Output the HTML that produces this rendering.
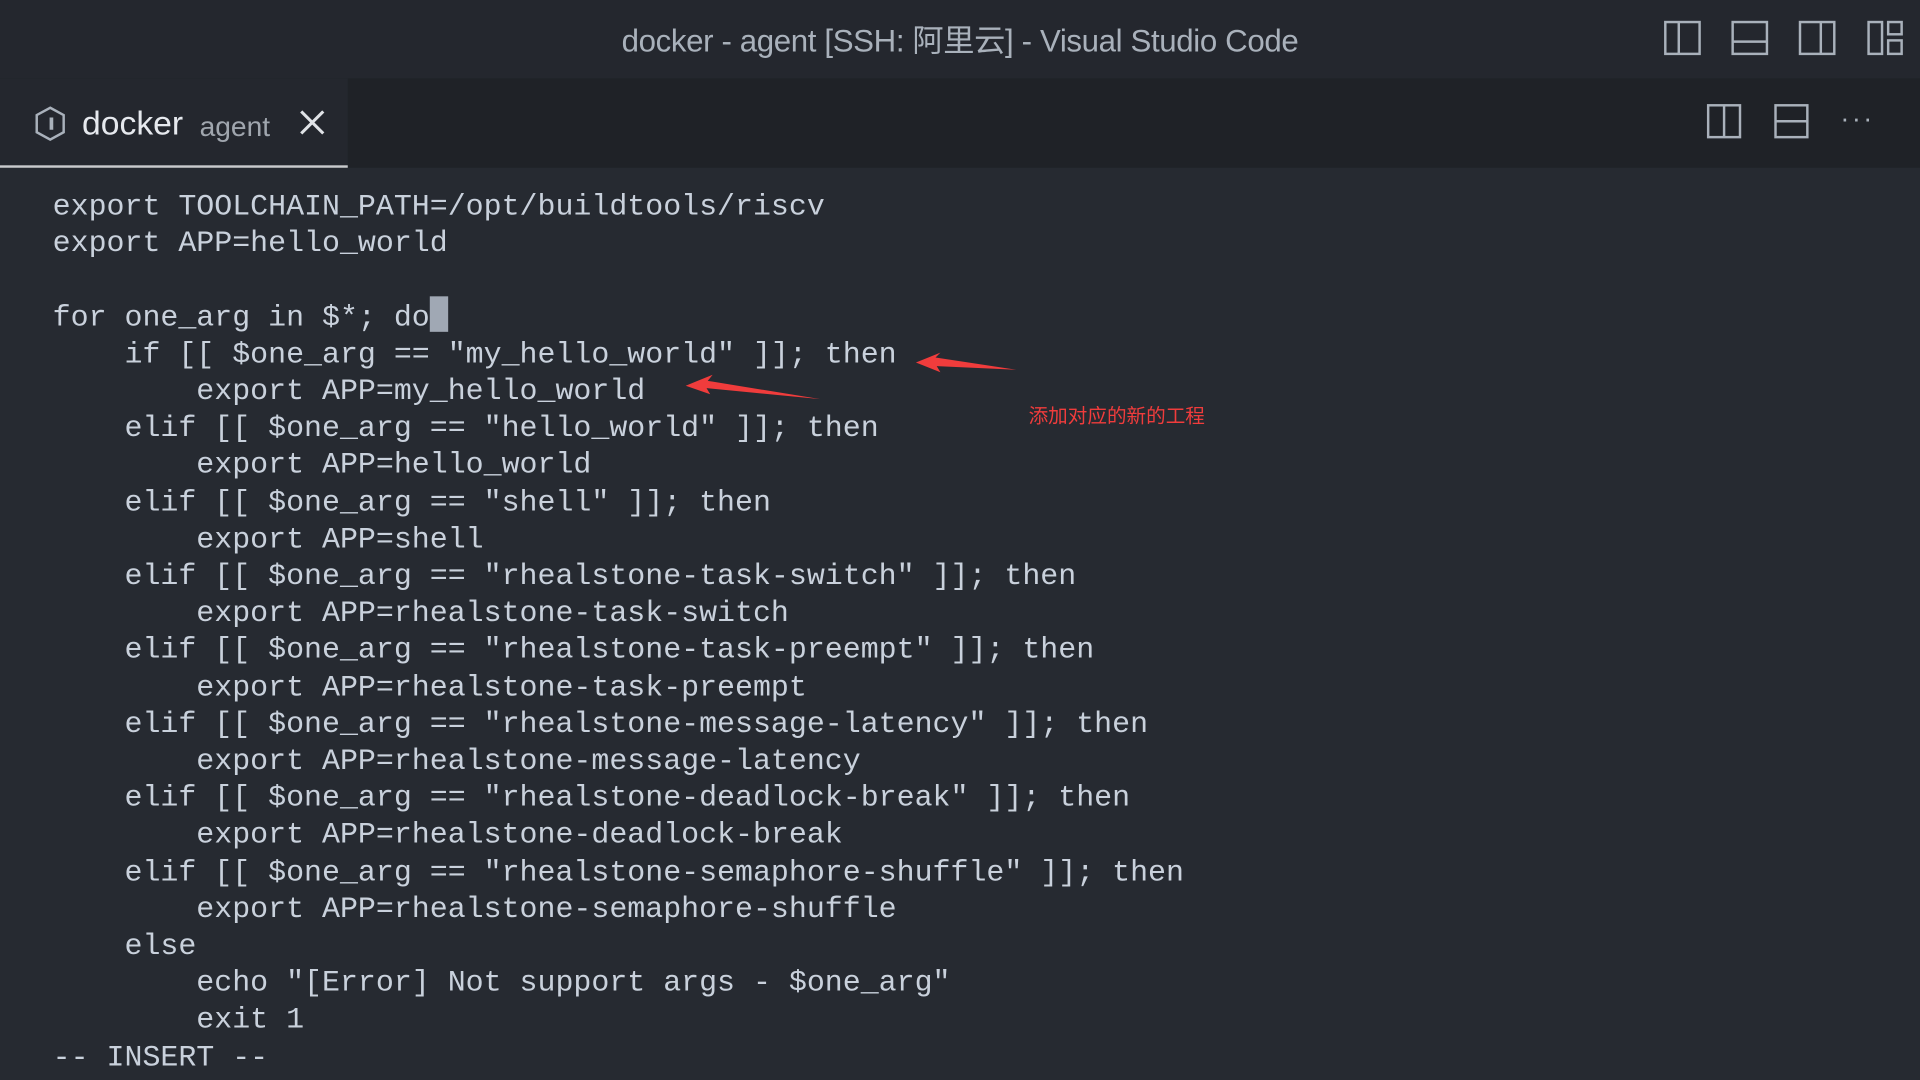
<!DOCTYPE html>
<html><head><meta charset="utf-8"><style>
html,body{margin:0;padding:0;background:#262a31;overflow:hidden;width:1920px;height:1080px}
#w{position:absolute;left:0;top:0;width:1568px;height:882px;transform:scale(1.22449);transform-origin:0 0;background:#262a31;font-family:"Liberation Sans","Noto Sans CJK SC",sans-serif}
#title{position:absolute;left:0;top:0;width:1568px;height:64px;background:#24272e}
#title .t{position:absolute;left:0;width:1568px;text-align:center;top:13px;font-size:25.5px;color:#a9b1bb;letter-spacing:-0.3px}
#tabs{position:absolute;left:0;top:64px;width:1568px;height:73px;background:#1f2227}
#tab{position:absolute;left:0;top:0;width:284px;height:71px;background:#24272e;border-bottom:2px solid #c8cacd}
#tab .n{position:absolute;left:67px;top:21px;font-size:27.5px;color:#e6e9ee}
#tab .a{position:absolute;left:163px;top:26px;font-size:23px;color:#a0a6ae}
#code{position:absolute;left:43px;top:155px;font-family:"Liberation Mono",monospace;font-size:24.45px;line-height:30.2px;color:#c9d1dc;white-space:pre;margin:0}
.ic{position:absolute;stroke:#a9b1bb;fill:none;stroke-width:2}
</style></head><body><div id="w">
<div id="title"><div class="t">docker - agent [SSH: 阿里云] - Visual Studio Code</div>
<svg class="ic" style="left:1358px;top:16px" width="32" height="30"><rect x="2" y="2" width="28" height="26"/><line x1="13" y1="2" x2="13" y2="28"/></svg>
<svg class="ic" style="left:1413px;top:16px" width="32" height="30"><rect x="2" y="2" width="28" height="26"/><line x1="2" y1="18" x2="30" y2="18"/></svg>
<svg class="ic" style="left:1468px;top:16px" width="32" height="30"><rect x="2" y="2" width="28" height="26"/><line x1="19" y1="2" x2="19" y2="28"/></svg>
<svg class="ic" style="left:1524px;top:16px" width="32" height="30"><rect x="2" y="2" width="11" height="26"/><rect x="18" y="2" width="11" height="10"/><rect x="18" y="17" width="11" height="11"/></svg>
</div>
<div id="tabs">
<div id="tab">
<svg class="ic" style="left:28px;top:22px" width="26" height="30"><path d="M13 2 L24 8 L24 22 L13 28 L2 22 L2 8 Z"/><path d="M14 10 v10" stroke-width="3"/></svg>
<span class="n">docker</span><span class="a">agent</span>
<svg class="ic" style="left:244px;top:25px" width="22" height="22"><path d="M2 2 L20 20 M20 2 L2 20" stroke="#e0e3e7" stroke-width="2.5"/></svg>
</div>
<svg class="ic" style="left:1393px;top:20px" width="32" height="30"><rect x="2" y="2" width="26" height="26"/><line x1="15" y1="2" x2="15" y2="28"/></svg>
<svg class="ic" style="left:1448px;top:20px" width="32" height="30"><rect x="2" y="2" width="26" height="26"/><line x1="2" y1="15" x2="28" y2="15"/></svg>
<div style="position:absolute;left:1503px;top:20px;color:#a9b1bb;font-size:22px;letter-spacing:2px">···</div>
</div>
<div style="position:absolute;left:351px;top:242px;width:15px;height:29px;background:#a0a8b4"></div>
<pre id="code">export TOOLCHAIN_PATH=/opt/buildtools/riscv
export APP=hello_world

for one_arg in $*; do
    if [[ $one_arg == "my_hello_world" ]]; then
        export APP=my_hello_world
    elif [[ $one_arg == "hello_world" ]]; then
        export APP=hello_world
    elif [[ $one_arg == "shell" ]]; then
        export APP=shell
    elif [[ $one_arg == "rhealstone-task-switch" ]]; then
        export APP=rhealstone-task-switch
    elif [[ $one_arg == "rhealstone-task-preempt" ]]; then
        export APP=rhealstone-task-preempt
    elif [[ $one_arg == "rhealstone-message-latency" ]]; then
        export APP=rhealstone-message-latency
    elif [[ $one_arg == "rhealstone-deadlock-break" ]]; then
        export APP=rhealstone-deadlock-break
    elif [[ $one_arg == "rhealstone-semaphore-shuffle" ]]; then
        export APP=rhealstone-semaphore-shuffle
    else
        echo "[Error] Not support args - $one_arg"
        exit 1
-- INSERT --</pre>
<svg style="position:absolute;left:0;top:0" width="1568" height="882">
<polygon points="830,302 764,292 768,288 748,296 768,304 765,299" fill="#f03c3c"/>
<polygon points="670,326 578,311 582,306 560,315 580,322 577,317" fill="#f03c3c"/>
</svg>
<div style="position:absolute;left:840px;top:326px;font-size:16px;color:#f03c3c;font-family:'Noto Sans CJK SC',sans-serif">添加对应的新的工程</div>
</div></body></html>
